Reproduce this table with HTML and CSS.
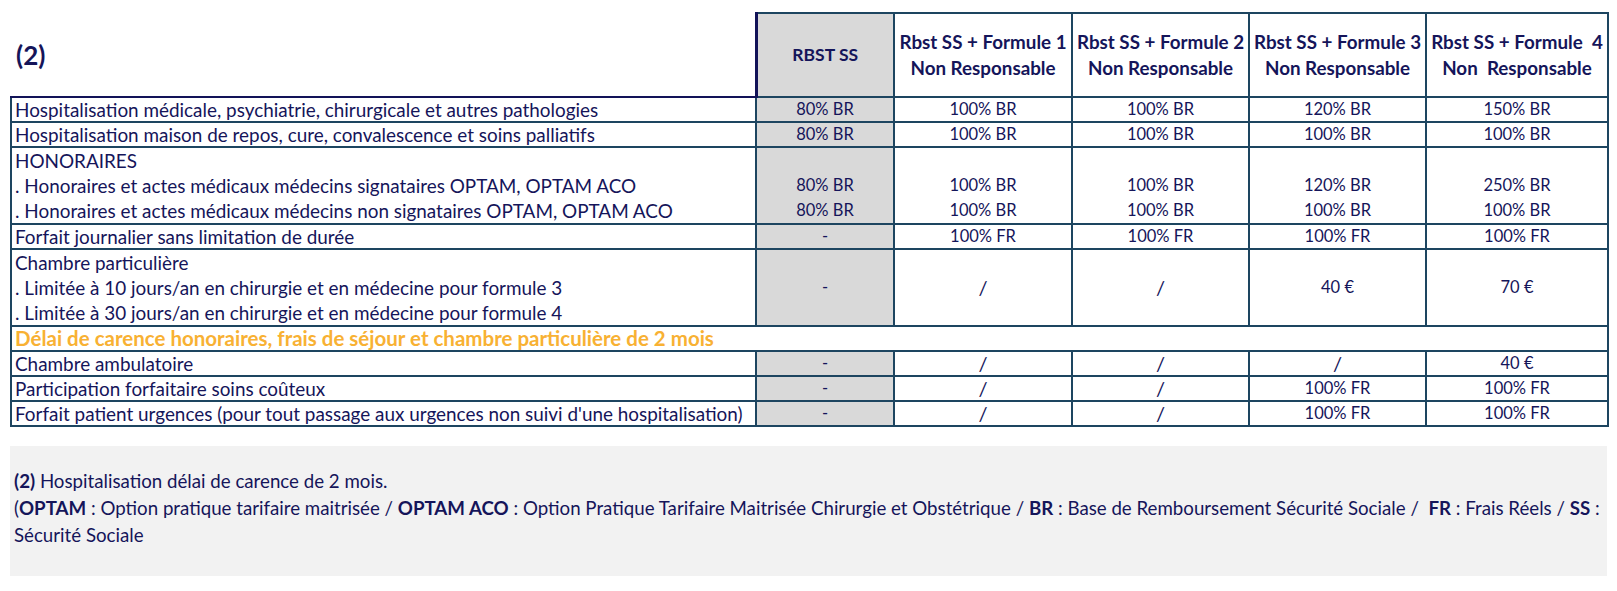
FILE: index.html
```html
<!DOCTYPE html>
<html lang="fr">
<head>
<meta charset="utf-8">
<link rel="stylesheet" href="styles.css">
</head>
<body>
<div class="page">
  <table class="grid">
    <colgroup>
      <col class="c-label">
      <col class="c-ss">
      <col class="c-f1">
      <col class="c-f2">
      <col class="c-f3">
      <col class="c-f4">
    </colgroup>
    <thead>
      <tr class="head">
        <th class="title">(2)</th>
        <th class="ss first">RBST SS</th>
        <th>Rbst SS + Formule 1<br>Non Responsable</th>
        <th>Rbst SS + Formule 2<br>Non Responsable</th>
        <th>Rbst SS + Formule 3<br>Non Responsable</th>
        <th>Rbst SS + Formule&nbsp; 4<br>Non&nbsp; Responsable</th>
      </tr>
    </thead>
    <tbody>
      <tr class="one">
        <td class="lab">Hospitalisation médicale, psychiatrie, chirurgicale et autres pathologies</td>
        <td class="ss">80% BR</td><td>100% BR</td><td>100% BR</td><td>120% BR</td><td>150% BR</td>
      </tr>
      <tr class="one">
        <td class="lab">Hospitalisation maison de repos, cure, convalescence et soins palliatifs</td>
        <td class="ss">80% BR</td><td>100% BR</td><td>100% BR</td><td>100% BR</td><td>100% BR</td>
      </tr>
      <tr class="three">
        <td class="lab">HONORAIRES<br>. Honoraires et actes médicaux médecins signataires OPTAM, OPTAM ACO<br>. Honoraires et actes médicaux médecins non signataires OPTAM, OPTAM ACO</td>
        <td class="ss"><br>80% BR<br>80% BR</td>
        <td><br>100% BR<br>100% BR</td>
        <td><br>100% BR<br>100% BR</td>
        <td><br>120% BR<br>100% BR</td>
        <td><br>250% BR<br>100% BR</td>
      </tr>
      <tr class="one">
        <td class="lab">Forfait journalier sans limitation de durée</td>
        <td class="ss">-</td><td>100% FR</td><td>100% FR</td><td>100% FR</td><td>100% FR</td>
      </tr>
      <tr class="three">
        <td class="lab">Chambre particulière<br>. Limitée à 10 jours/an en chirurgie et en médecine pour formule 3<br>. Limitée à 30 jours/an en chirurgie et en médecine pour formule 4</td>
        <td class="ss">-</td><td class="sl">/</td><td class="sl">/</td><td>40 €</td><td>70 €</td>
      </tr>
      <tr class="one">
        <td class="lab notice" colspan="6">Délai de carence honoraires, frais de séjour et chambre particulière de 2 mois</td>
      </tr>
      <tr class="one">
        <td class="lab">Chambre ambulatoire</td>
        <td class="ss">-</td><td class="sl">/</td><td class="sl">/</td><td class="sl">/</td><td>40 €</td>
      </tr>
      <tr class="one">
        <td class="lab">Participation forfaitaire soins coûteux</td>
        <td class="ss">-</td><td class="sl">/</td><td class="sl">/</td><td>100% FR</td><td>100% FR</td>
      </tr>
      <tr class="one">
        <td class="lab">Forfait patient urgences (pour tout passage aux urgences non suivi d'une hospitalisation)</td>
        <td class="ss">-</td><td class="sl">/</td><td class="sl">/</td><td>100% FR</td><td>100% FR</td>
      </tr>
    </tbody>
  </table>

  <div class="notes">
    <p><b>(2)</b> Hospitalisation délai de carence de 2 mois.</p>
    <p>(<b>OPTAM</b> : Option pratique tarifaire maitrisée / <b>OPTAM ACO</b> : Option Pratique Tarifaire Maitrisée Chirurgie et Obstétrique / <b>BR</b> : Base de Remboursement Sécurité Sociale /&nbsp; <b>FR</b> : Frais Réels / <b>SS</b> :<br>Sécurité Sociale</p>
  </div>
</div>
</body>
</html>
```

FILE: styles.css
```css
html, body {
  margin: 0;
  padding: 0;
  background: #ffffff;
}

body {
  font-family: Lato, "Open Sans", sans-serif;
  color: #15155a;
}

.page {
  padding: 12px 10px 0 10px;
  width: 1597px;
}

.grid {
  border-collapse: collapse;
  table-layout: fixed;
  width: 1597px;
  font-size: 16.5px;
}

.c-label { width: 745px; }
.c-ss { width: 138px; }
.c-f1 { width: 178px; }
.c-f2 { width: 177px; }
.c-f3 { width: 177px; }
.c-f4 { width: 182px; }

.grid th,
.grid td {
  border: 2px solid #1d4560;
  padding: 0;
  text-align: center;
  vertical-align: middle;
}

.head th {
  height: 82px;
  line-height: 26px;
  font-weight: 700;
  font-size: 18.8px;
  white-space: nowrap;
}

.head th.ss {
  font-size: 17.5px;
}

.head th.title {
  border: none;
  border-bottom: 2px solid #121358;
  text-align: left;
  padding-left: 5px;
  font-size: 26px;
}

.head th.first {
  border-left: 3px solid #121358;
}

.ss {
  background: #d9d9d9;
}

.one td {
  height: 23px;
  line-height: 23px;
}

.three td {
  line-height: 25px;
}

.grid td.lab {
  text-align: left;
  padding-left: 3px;
  white-space: nowrap;
  font-size: 18.9px;
}

.grid td.sl {
  font-size: 20px;
}

.grid td.notice {
  color: #f8b133;
  font-weight: 700;
  font-size: 20.5px;
}

.notes {
  margin-top: 19px;
  background: #f2f2f2;
  padding: 22px 4px 27px 4px;
  font-size: 18.7px;
  line-height: 27px;
}

.notes p {
  margin: 0;
}

.notes b {
  font-weight: 700;
}
```
